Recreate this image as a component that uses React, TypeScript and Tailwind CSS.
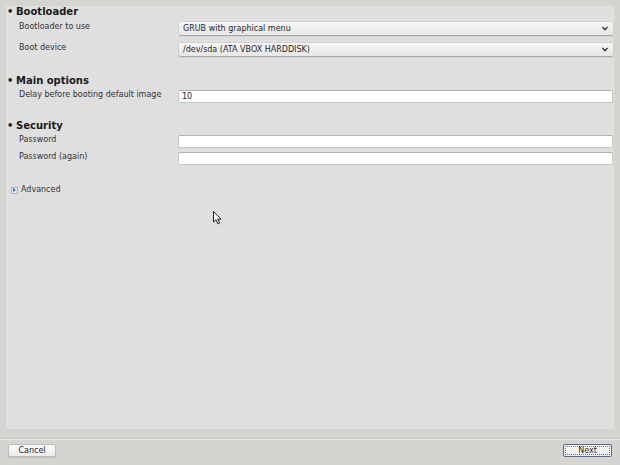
const FONT = { fontFamily: '"DejaVu Sans", "Liberation Sans", sans-serif' };

function Header({ title, className }: { title: string; className: string }) {
  return (
    <div className={`flex h-[12px] items-center text-[10px] font-bold leading-[12px] text-[#1a1a1a] ${className}`}>
      <span className="w-[9px] text-left">•</span>
      <span>{title}</span>
    </div>
  );
}

function Chevron() {
  return (
    <svg width="6" height="5" viewBox="0 0 6 5" className="shrink-0">
      <path d="M0.5 1 L3 3.8 L5.5 1" fill="none" stroke="#333" strokeWidth="1.3" />
    </svg>
  );
}

function SelectRow({ label, value, className }: { label: string; value: string; className: string }) {
  return (
    <div className={`flex items-start ${className}`}>
      <div className="mt-[1px] w-[172px] pl-[12px] text-[8px] leading-[8px] text-[#333]">{label}</div>
      <div className="flex h-[14px] flex-1 items-center justify-between rounded-[2px] border-b border-b-[#a9a9a9] bg-gradient-to-b from-[#f6f6f6] to-[#e7e7e7] pl-[4px] pr-[5px] shadow-[0_0_0_1px_#d2d2d2] text-[8px] text-[#1f1f1f]">
        <span>{value}</span>
        <Chevron />
      </div>
    </div>
  );
}

function InputRow({ label, value, className }: { label: string; value?: string; className: string }) {
  return (
    <div className={`flex items-start ${className}`}>
      <div className="mt-[1px] w-[171px] pl-[12px] text-[8px] leading-[8px] text-[#333]">{label}</div>
      <div className="flex h-[13px] flex-1 items-center rounded-[2px] border border-[#c4c4c4] border-t-[#b2b2b2] bg-white pl-[3px] text-[8px] text-[#1f1f1f]">
        {value}
      </div>
    </div>
  );
}

export default function App() {
  return (
    <div className="relative flex h-[465px] w-[620px] flex-col bg-[#d5d4d1]" style={FONT}>
      <div className="mx-[6px] mt-[6px] flex h-[423px] flex-col bg-[#dfdfdf] pl-px pr-px">
        <Header title="Bootloader" className="" />
        <SelectRow label="Bootloader to use" value="GRUB with graphical menu" className="mt-[4px]" />
        <SelectRow label="Boot device" value="/dev/sda (ATA VBOX HARDDISK)" className="mt-[7px]" />

        <Header title="Main options" className="mt-[18px]" />
        <InputRow label="Delay before booting default image" value="10" className="mt-[3px]" />

        <Header title="Security" className="mt-[17px]" />
        <InputRow label="Password" className="mt-[3px]" />
        <InputRow label="Password (again)" className="mt-[4px]" />

        <div className="mt-[19px] flex h-[12px] items-center pl-[4px] text-[8px] text-[#333]">
          <span className="flex h-[7px] w-[7px] items-center justify-center border border-[#9fb4d9] bg-[#e4ecfa]">
            <svg width="3" height="4" viewBox="0 0 3 4">
              <path d="M0 0 L3 2 L0 4 Z" fill="#3a6bc4" />
            </svg>
          </span>
          <span className="ml-[3px]">Advanced</span>
        </div>
      </div>

      <div className="mt-[9px] h-px bg-[#c9c8c5]" />
      <div className="h-px bg-[#e9e9e7]" />

      <div className="mt-[4px] flex justify-between px-[8px]">
        <button className="flex h-[13px] w-[48px] items-center justify-center rounded-[2px] border border-[#bdbdbd] bg-gradient-to-b from-[#fbfbfb] to-[#ececec] text-[8px] text-[#1f1f1f] shadow-[0_1px_0_#bdbdbd]">
          Cancel
        </button>
        <button className="flex h-[13px] w-[49px] items-center justify-center rounded-[2px] border border-[#4a6a9a] bg-gradient-to-b from-[#fbfbfb] to-[#ececec] text-[8px] text-[#1f1f1f]">
          <span className="flex h-[9px] w-[45px] items-center justify-center border border-dotted border-[#5c6f8a]">Next</span>
        </button>
      </div>

      <svg
        className="absolute left-[213px] top-[211px]"
        width="9"
        height="14"
        viewBox="0 0 9 14"
      >
        <path d="M0.5 0.5 L0.5 11 L3 8.8 L5 13 L6.6 12.2 L4.7 8.2 L8 8.2 Z" fill="#fff" stroke="#222" strokeWidth="1" strokeLinejoin="round" />
      </svg>
    </div>
  );
}
